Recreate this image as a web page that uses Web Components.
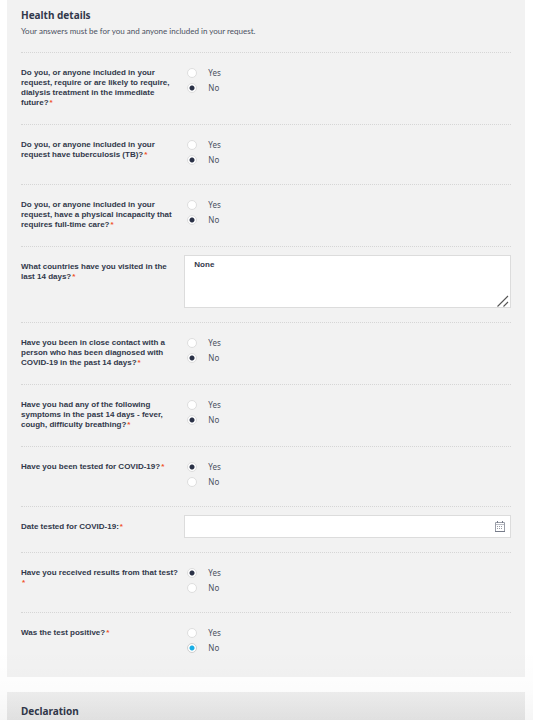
<!DOCTYPE html>
<html lang="en">
<head>
<meta charset="utf-8">
<meta name="viewport" content="width=device-width, initial-scale=1">
<title>Health details</title>
<style>
  body { margin: 0; background: #fff; color: #31384a; font-family: "Liberation Sans", Arial, sans-serif; }
</style>
</head>
<body>
<health-form></health-form>

<template id="form-tpl">
  <style>
    :host { display: block; position: relative; height: 100vh; overflow: hidden; padding: 0 8px 0 7px; box-sizing: border-box; }
    .shade { position: absolute; left: 0; right: 0; bottom: 0; height: 72px; pointer-events: none; background: linear-gradient(rgba(0,0,0,0), rgba(0,0,0,.01) 40px, rgba(0,0,0,.04)); }
  </style>
  <form-card heading="Health details">
    <span slot="intro">Your answers must be for you and anyone included in your request.</span>
    <radio-question value="No">Do you, or anyone included in your request, require or are likely to require, dialysis treatment in the immediate future?</radio-question>
    <radio-question value="No">Do you, or anyone included in your request have tuberculosis (TB)?</radio-question>
    <radio-question value="No">Do you, or anyone included in your request, have a physical incapacity that requires full-time care?</radio-question>
    <text-question value="None">What countries have you visited in the last 14 days?</text-question>
    <radio-question value="No">Have you been in close contact with a person who has been diagnosed with COVID-19 in the past 14 days?</radio-question>
    <radio-question value="No">Have you had any of the following symptoms in the past 14 days - fever, cough, difficulty breathing?</radio-question>
    <radio-question value="Yes">Have you been tested for COVID-19?</radio-question>
    <date-question>Date tested for COVID-19:</date-question>
    <radio-question value="Yes">Have you received results from that test?</radio-question>
    <radio-question value="No" active class="last">Was the test positive?</radio-question>
  </form-card>
  <form-card heading="Declaration" class="next"></form-card>
  <div class="shade"></div>
</template>

<template id="card-tpl">
  <style>
    :host { display: block; background: #f2f2f2; padding: 9px 14px 5px; margin-bottom: 15px; }
    :host(.next) { background: linear-gradient(#efefef, #e8e8e8 32px); padding: 13px 14px 32px; }
    h2 { margin: 0; font-family: "Noto Sans", sans-serif; font-size: 10px; line-height: 13px; font-weight: 700; }
    p { margin: 0; font-family: Lato, sans-serif; font-size: 8px; line-height: 12px; padding: 3px 0 15px; color: #4a5161; border-bottom: 1px dotted #d6d6d6; }
  </style>
  <h2></h2>
  <p><slot name="intro"></slot></p>
  <slot></slot>
</template>

<script>
  const fromTemplate = (host, id) => {
    const root = host.attachShadow({ mode: 'open' });
    root.append(document.getElementById(id).content.cloneNode(true));
    return root;
  };

  const rowStyle = `
    :host { display: grid; grid-template-columns: minmax(0, 1fr) minmax(0, 2fr); padding: 15px 0 16px; border-bottom: 1px dotted #d6d6d6; }
    :host(.last) { border-bottom: 0; }
    :host(text-question), :host(date-question) { padding: 8px 0 14px; }
    .q { font-size: 8px; line-height: 10px; font-weight: 700; padding-right: 5px; }
    .req { margin-left: 1px; color: #f0532d; }
    .field { position: relative; display: flex; }
    .field svg { position: absolute; pointer-events: none; }
    input, textarea { font: inherit; color: inherit; box-sizing: border-box; margin: 0; }
    .box { width: 100%; background: #fff; border: 1px solid #dcdcdc; border-radius: 0; padding: 3px 9px; outline: 0;
           font-size: 8px; line-height: 12px; font-weight: 700; resize: none; display: block; }
  `;

  let count = 0;

  customElements.define('radio-question', class extends HTMLElement {
    connectedCallback() {
      const id = 'q' + (++count);
      const option = v => `<label><input type="radio" name="${id}" value="${v}"${this.getAttribute('value') === v ? ' checked' : ''}>${v}</label>`;
      this.attachShadow({ mode: 'open' }).innerHTML = `<style>${rowStyle}
        .options { display: grid; gap: 5px; align-content: start; justify-items: start; padding: 0 0 3px 3px; }
        .options label { display: flex; align-items: center; gap: 11px; height: 10px; font-family: "Noto Sans", sans-serif; font-size: 8px; line-height: 10px; color: #4a5161; }
        input { appearance: none; width: 10px; height: 10px; border: 1px solid #dedede; border-radius: 50%; background: #fff; }
        input:checked { background: radial-gradient(circle, #2b3247 0 2px, #fff 3px); }
        :host([active]) input:checked { border-color: #cfcfcf; background: radial-gradient(circle, #1aaee5 0 2px, #fff 3px); }
      </style>
      <div class="q" id="${id}"><slot></slot><wbr><span class="req">*</span></div>
      <div class="options" role="radiogroup" aria-labelledby="${id}">${option('Yes')}${option('No')}</div>`;
    }
  });

  customElements.define('text-question', class extends HTMLElement {
    connectedCallback() {
      this.attachShadow({ mode: 'open' }).innerHTML = `<style>${rowStyle}
        .q { padding-top: 7px; }
        .box { height: 53px; }
        svg { right: 2px; bottom: 1px; }
      </style>
      <label class="q" for="t"><slot></slot><wbr><span class="req">*</span></label>
      <div class="field"><textarea class="box" id="t"></textarea>
        <svg width="12" height="12" viewBox="0 0 12 12" fill="none" stroke="#555" stroke-width="1.1"><path d="M.5 11.5 11 1M6.500 11.500 11 7"/></svg>
      </div>`;
      this.shadowRoot.querySelector('textarea').value = this.getAttribute('value');
    }
  });

  customElements.define('date-question', class extends HTMLElement {
    connectedCallback() {
      this.attachShadow({ mode: 'open' }).innerHTML = `<style>${rowStyle}
        .q { padding-top: 7px; }
        .box { height: 23px; }
        svg { right: 6px; top: 6px; }
      </style>
      <label class="q" for="d"><slot></slot><wbr><span class="req">*</span></label>
      <div class="field"><input class="box" id="d" type="text">
        <svg width="10" height="11" viewBox="0 0 10 11" fill="none" stroke="#9a9ea8"><path d="M.5 1.500h9v9h-9z"/><path d="M0 10.500h10M2.500 0v2M7.500 0v2" stroke="#777c8a"/><path d="M1 3.500h8" stroke="#b9bcc4"/><path d="M2 5.500h6M2 7.500h6" stroke-dasharray="1 1"/></svg>
      </div>`;
    }
  });

  customElements.define('form-card', class extends HTMLElement {
    connectedCallback() {
      const root = fromTemplate(this, 'card-tpl');
      root.querySelector('h2').textContent = this.getAttribute('heading');
      if (!this.querySelector('[slot=intro]')) root.querySelector('p').remove();
    }
  });

  customElements.define('health-form', class extends HTMLElement {
    connectedCallback() { fromTemplate(this, 'form-tpl'); }
  });
</script>
</body>
</html>
